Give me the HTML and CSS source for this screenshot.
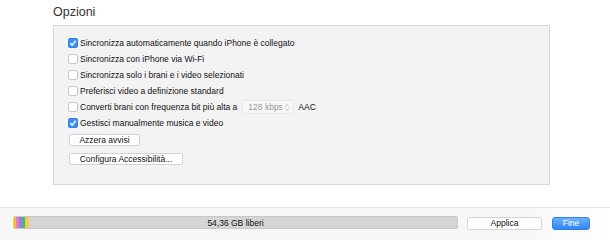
FILE: index.html
```html
<!DOCTYPE html>
<html lang="it">
<head>
<meta charset="utf-8">
<link rel="stylesheet" href="styles.css">
</head>
<body>
<div class="page">
  <main class="content">
    <h2 class="title">Opzioni</h2>
    <section class="panel">
      <label class="row"><span class="cb checked"></span>Sincronizza automaticamente quando iPhone è collegato</label>
      <label class="row"><span class="cb"></span>Sincronizza con iPhone via Wi-Fi</label>
      <label class="row"><span class="cb"></span>Sincronizza solo i brani e i video selezionati</label>
      <label class="row"><span class="cb"></span>Preferisci video a definizione standard</label>
      <label class="row"><span class="cb"></span><span>Converti brani con frequenza bit più alta a</span><span class="select"><span>128 kbps</span><svg class="updown" width="6" height="9" viewBox="0 0 6 9"><path d="M1 3.5 L3 1.5 L5 3.5 M1 5.5 L3 7.5 L5 5.5" fill="none" stroke="#b8b8b8" stroke-width="0.9"/></svg></span><span class="aac">AAC</span></label>
      <label class="row"><span class="cb checked"></span>Gestisci manualmente musica e video</label>
      <button class="btn first">Azzera avvisi</button>
      <button class="btn second">Configura Accessibilità...</button>
    </section>
  </main>
  <footer class="footer">
    <div class="storage">
      <span class="seg s1"></span><span class="seg s2"></span><span class="seg s3"></span><span class="seg s4"></span><span class="seg s5"></span>
      <span class="free">54,36 GB liberi</span>
    </div>
    <button class="fbtn apply">Applica</button>
    <button class="fbtn done">Fine</button>
  </footer>
</div>
</body>
</html>
```
FILE: styles.css
```css
* { box-sizing: border-box; }
html, body { margin: 0; padding: 0; }
body {
  width: 610px;
  height: 240px;
  background: #ffffff;
  font-family: "Liberation Sans", Arial, sans-serif;
  color: #222;
  overflow: hidden;
}
.page { display: flex; flex-direction: column; height: 240px; }
.content { height: 207px; padding-left: 53px; }
.title {
  margin: 0;
  padding-top: 5px;
  height: 25px;
  font-size: 12.5px;
  font-weight: normal;
  color: #333;
}
.panel {
  width: 497px;
  height: 160px;
  background: #f3f3f3;
  border: 1px solid #d6d6d6;
  padding: 9px 0 0 14px;
  display: flex;
  flex-direction: column;
  align-items: flex-start;
}
.row {
  height: 16px;
  display: flex;
  align-items: center;
  font-size: 8.5px;
  color: #111;
  white-space: nowrap;
}
.cb {
  width: 10px;
  height: 10px;
  border: 1px solid #c9c9c9;
  border-radius: 2px;
  background: #fff;
  margin-right: 2px;
  flex: none;
}
.cb.checked {
  background: #3b8df4 url("data:image/svg+xml;utf8,<svg xmlns='http://www.w3.org/2000/svg' width='10' height='10' viewBox='0 0 10 10'><path d='M2.3 5.2 L4.2 7.1 L7.7 2.6' fill='none' stroke='white' stroke-width='1.5'/></svg>") center/10px 10px no-repeat;
  border-color: #3683e6;
}
.select {
  display: inline-flex;
  align-items: center;
  justify-content: space-between;
  width: 52px;
  height: 14px;
  margin-left: 5px;
  padding: 0 3px 0 5px;
  background: #f7f7f7;
  border: 1px solid #e8e8e8;
  border-radius: 2px;
  color: #9a9a9a;
  flex: none;
}
.updown { display: block; flex: none; }
.aac { margin-left: 4px; color: #111; }
.btn {
  height: 12px;
  padding: 0;
  margin: 0 0 0 1px;
  background: #fff;
  border: 1px solid #d2d2d2;
  border-radius: 2px;
  font-family: inherit;
  font-size: 8.5px;
  color: #111;
  line-height: 10px;
}
.btn.first { margin-top: 3px; margin-bottom: 7px; width: 71px; }
.btn.second { width: 114px; }
.footer {
  flex: 1;
  border-top: 1px solid #e6e6e6;
  background: linear-gradient(to right, #f7f7f7 0%, #f7f7f7 85%, #ffffff 100%);
  display: flex;
  align-items: flex-start;
  padding: 8px 0 0 13px;
}
.storage {
  position: relative;
  width: 445px;
  height: 13px;
  background: #d5d5d5;
  border: 1px solid #c8c8c8;
  border-radius: 2px;
  display: flex;
  overflow: hidden;
}
.seg { height: 100%; flex: none; }
.s1 { width: 2px; background: #f0c419; }
.s2 { width: 3px; background: #e47fb8; }
.s3 { width: 3px; background: #a57ae0; }
.s4 { width: 3px; background: #3fb6a0; }
.s5 { width: 4px; background: #f4cf3d; }
.free {
  position: absolute;
  left: 0;
  right: 0;
  top: 0;
  bottom: 0;
  display: flex;
  align-items: center;
  justify-content: center;
  font-size: 8.5px;
  color: #111;
}
.fbtn {
  height: 13px;
  margin-top: 1px;
  padding: 0;
  font-family: inherit;
  font-size: 8.5px;
  line-height: 11px;
  border-radius: 3px;
}
.apply {
  width: 75px;
  margin-left: 9px;
  background: #fff;
  border: 1px solid #d4d4d4;
  color: #111;
}
.done {
  width: 38px;
  margin-left: 10px;
  background: linear-gradient(#6cb0fb, #2f86f5);
  border: 1px solid #2f7fe8;
  color: #fff;
}
```
